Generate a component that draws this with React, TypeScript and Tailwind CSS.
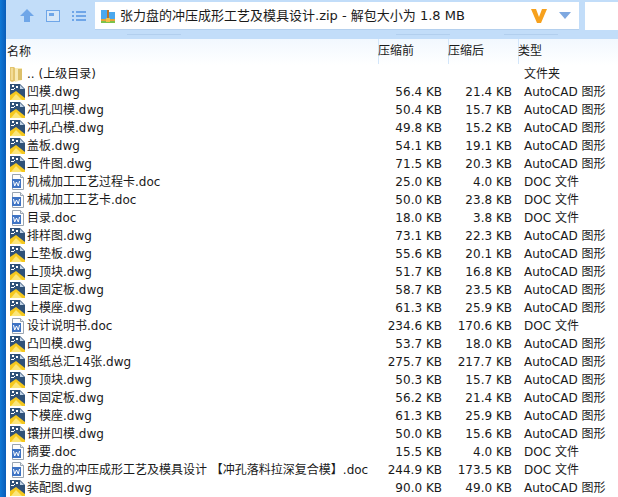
const rows: [string, string, string, string][] = [
  ["凹模.dwg", "56.4 KB", "21.4 KB", "c"],
  ["冲孔凹模.dwg", "50.4 KB", "15.7 KB", "c"],
  ["冲孔凸模.dwg", "49.8 KB", "15.2 KB", "c"],
  ["盖板.dwg", "54.1 KB", "19.1 KB", "c"],
  ["工件图.dwg", "71.5 KB", "20.3 KB", "c"],
  ["机械加工工艺过程卡.doc", "25.0 KB", "4.0 KB", "d"],
  ["机械加工工艺卡.doc", "50.0 KB", "23.8 KB", "d"],
  ["目录.doc", "18.0 KB", "3.8 KB", "d"],
  ["排样图.dwg", "73.1 KB", "22.3 KB", "c"],
  ["上垫板.dwg", "55.6 KB", "20.1 KB", "c"],
  ["上顶块.dwg", "51.7 KB", "16.8 KB", "c"],
  ["上固定板.dwg", "58.7 KB", "23.5 KB", "c"],
  ["上模座.dwg", "61.3 KB", "25.9 KB", "c"],
  ["设计说明书.doc", "234.6 KB", "170.6 KB", "d"],
  ["凸凹模.dwg", "53.7 KB", "18.0 KB", "c"],
  ["图纸总汇14张.dwg", "275.7 KB", "217.7 KB", "c"],
  ["下顶块.dwg", "50.3 KB", "15.7 KB", "c"],
  ["下固定板.dwg", "56.2 KB", "21.4 KB", "c"],
  ["下模座.dwg", "61.3 KB", "25.9 KB", "c"],
  ["镶拼凹模.dwg", "50.0 KB", "15.6 KB", "c"],
  ["摘要.doc", "15.5 KB", "4.0 KB", "d"],
  ["张力盘的冲压成形工艺及模具设计 【冲孔落料拉深复合模】.doc", "244.9 KB", "173.5 KB", "d"],
  ["装配图.dwg", "90.0 KB", "49.0 KB", "c"],
];

function FolderIcon() {
  return (
    <svg width="17" height="17" viewBox="0 0 17 17" className="shrink-0">
      <path d="M1 1h4l1 1v13l-3 1-2-1z" fill="#e3c56f" />
      <path d="M6 2h7v12l-7 2z" fill="#f8eab4" />
      <path d="M9 3h4v11H9z" fill="#dcc06a" />
      <path d="M2 2h2v12H2z" fill="#f3dc95" />
    </svg>
  );
}

function CadIcon() {
  return (
    <svg width="17" height="17" viewBox="0 0 17 17" className="shrink-0">
      <path d="M1 0h10l5 5v11H1z" fill="#2f5178" />
      <path d="M3 1h2v2H3zM7 2h2v2H7zM2 5h3v1H2zM5 4h1v1H5z" fill="#ffffff" />
      <path d="M11 1l4 4h-4z" fill="#c3d4e6" />
      <path d="M1 16V11l6-4 9 7v2z" fill="#f5c81f" />
      <path d="M2 16l5-6 6 6z" fill="#fbe67a" />
    </svg>
  );
}

function DocIcon() {
  return (
    <svg width="17" height="17" viewBox="0 0 17 17" className="shrink-0">
      <path d="M3.5.5h8l3 3v12h-11z" fill="#fdfdfd" stroke="#9aa5b1" />
      <path d="M11.5.5v3h3" fill="#e6ebf0" stroke="#9aa5b1" />
      <rect x="3" y="5" width="9" height="9" fill="#3f74c4" />
      <path d="M4.5 7l1.2 5 1.8-4 1.8 4 1.2-5" fill="none" stroke="#ffffff" strokeWidth="1" />
    </svg>
  );
}

function Row({ name, a, b, kind }: { name: string; a: string; b: string; kind: string }) {
  return (
    <div className="flex h-[18px] items-center whitespace-nowrap pl-px">
      <div className="flex w-[361px] items-center pl-[2px] text-[#1a1a1a]">
        {kind === "c" ? <CadIcon /> : kind === "d" ? <DocIcon /> : <FolderIcon />}
        <span className="ml-px">{name}</span>
      </div>
      <div className="w-[74px] text-right">{a}</div>
      <div className="w-[70px] text-right">{b}</div>
      <div className="ml-[12px]">{kind === "d" ? "DOC 文件" : kind === "c" ? "AutoCAD 图形" : "文件夹"}</div>
    </div>
  );
}

export default function App() {
  return (
    <div className="flex h-[497px] w-[618px] overflow-hidden bg-white text-[12px] text-[#1a1a1a] [font-family:'DejaVu_Sans','Noto_Sans_CJK_SC',sans-serif]">
      <div className="w-[6px] shrink-0 bg-gradient-to-r from-[#0f78d6] to-[#0a5cb8]" />
      <div className="flex min-w-0 flex-1 flex-col">
        <div className="relative flex h-[39px] shrink-0 items-start bg-[#c2ddf9] pt-[2px]">
          <div className="flex h-[28px] w-[89px] shrink-0 items-center pl-[13px]">
            <svg width="16" height="16" viewBox="0 0 16 16">
              <path d="M8 1l7 7h-4v6H5V8H1z" fill="#6fa6e8" />
            </svg>
            <svg width="15" height="13" viewBox="0 0 15 13" className="ml-[11px]">
              <rect x="0.5" y="0.5" width="13" height="11" fill="#d7e7f8" stroke="#6fa6e8" />
              <rect x="3" y="3" width="5" height="3" fill="#6fa6e8" />
            </svg>
            <svg width="15" height="11" viewBox="0 0 15 11" className="ml-[11px]">
              <path d="M0 0h2v2H0zM4 0h10v2H4zM0 4h2v2H0zM4 4h10v2H4zM0 8h2v2H0zM4 8h10v2H4z" fill="#6fa6e8" />
            </svg>
          </div>
          <div className="flex h-[28px] w-[484px] shrink-0 items-center border-b border-[#b4d0ee] bg-white pl-[5px] text-[13px]">
            <svg width="16" height="16" viewBox="0 0 16 16" className="shrink-0">
              <path d="M1 2h6l1 2h7v8H1z" fill="#4aa8ee" />
              <rect x="1" y="11" width="14" height="2" fill="#e8a33a" />
              <rect x="1" y="13" width="14" height="2" fill="#7cc24a" />
              <rect x="7" y="2" width="2" height="11" fill="#b8742a" />
              <rect x="6" y="10" width="4" height="4" fill="#f0c04a" />
            </svg>
            <span className="ml-[4px]">张力盘的冲压成形工艺及模具设计.zip - 解包大小为 1.8 MB</span>
            <svg width="16" height="16" viewBox="0 0 16 16" className="ml-auto shrink-0">
              <path d="M0 1h5l3 8 3-8h5l-6 14H6z" fill="#f7a11d" />
            </svg>
            <svg width="12" height="7" viewBox="0 0 12 7" className="ml-[12px] mr-[8px] shrink-0">
              <path d="M0 0h12L6 7z" fill="#7ea8e0" />
            </svg>
          </div>
          <div className="ml-[6px] h-[28px] flex-1 bg-white" />
          <div className="absolute left-[121px] top-[34px] h-px w-[54px] bg-[#b2cfee]" />
          <div className="absolute left-[390px] top-[34px] h-px w-[54px] bg-[#b2cfee]" />
          <div className="absolute left-[498px] top-[34px] h-px w-[54px] bg-[#b2cfee]" />
        </div>
        <div className="flex h-[26px] shrink-0 items-center bg-gradient-to-b from-[#f2f8fe] to-white pb-px pl-px">
          <div className="w-[371px]">名称</div>
          <div className="h-full w-[70px] border-l border-[#d3e6fa] leading-[24px] indent-[-1px]">压缩前</div>
          <div className="h-full w-[70px] border-l border-[#d3e6fa] leading-[24px] indent-[-1px]">压缩后</div>
          <div className="h-full flex-1 border-l border-[#d3e6fa] leading-[24px] indent-[-1px]">类型</div>
        </div>
        <Row name=".. (上级目录)" a="" b="" kind="f" />
        {rows.map((r) => (
          <Row key={r[0]} name={r[0]} a={r[1]} b={r[2]} kind={r[3]} />
        ))}
      </div>
    </div>
  );
}
